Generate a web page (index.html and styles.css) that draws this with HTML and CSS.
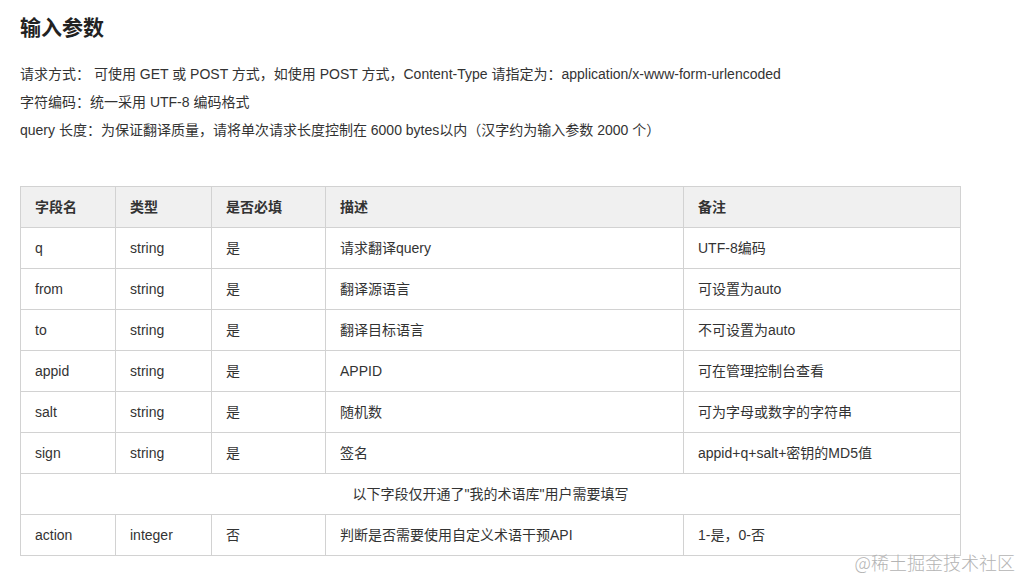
FILE: index.html
```html
<!DOCTYPE html>
<html lang="zh">
<head>
<meta charset="utf-8">
<link rel="stylesheet" href="styles.css">
</head>
<body>
<div class="page">
  <h1 class="title">输入参数</h1>
  <div class="info">
    <p>请求方式： 可使用 GET 或 POST 方式，如使用 POST 方式，Content-Type 请指定为：application/x-www-form-urlencoded</p>
    <p>字符编码：统一采用 UTF-8 编码格式</p>
    <p>query 长度：为保证翻译质量，请将单次请求长度控制在 6000 bytes以内（汉字约为输入参数 2000 个）</p>
  </div>
  <table class="params">
    <colgroup>
      <col class="c1"><col class="c2"><col class="c3"><col class="c4"><col class="c5">
    </colgroup>
    <thead>
      <tr><th>字段名</th><th>类型</th><th>是否必填</th><th>描述</th><th>备注</th></tr>
    </thead>
    <tbody>
      <tr><td>q</td><td>string</td><td>是</td><td>请求翻译query</td><td>UTF-8编码</td></tr>
      <tr><td>from</td><td>string</td><td>是</td><td>翻译源语言</td><td>可设置为auto</td></tr>
      <tr><td>to</td><td>string</td><td>是</td><td>翻译目标语言</td><td>不可设置为auto</td></tr>
      <tr><td>appid</td><td>string</td><td>是</td><td>APPID</td><td>可在管理控制台查看</td></tr>
      <tr><td>salt</td><td>string</td><td>是</td><td>随机数</td><td>可为字母或数字的字符串</td></tr>
      <tr><td>sign</td><td>string</td><td>是</td><td>签名</td><td>appid+q+salt+密钥的MD5值</td></tr>
      <tr><td colspan="5" class="merged">以下字段仅开通了"我的术语库"用户需要填写</td></tr>
      <tr><td>action</td><td>integer</td><td>否</td><td>判断是否需要使用自定义术语干预API</td><td>1-是，0-否</td></tr>
    </tbody>
  </table>
</div>
<div class="watermark">@稀土掘金技术社区</div>
</body>
</html>
```

FILE: styles.css
```css
html, body {
  margin: 0;
  padding: 0;
  background: #fff;
}
body {
  font-family: "Liberation Sans", Arial, "Noto Sans CJK SC", sans-serif;
  color: #333;
  font-size: 14px;
  width: 1022px;
  height: 580px;
  overflow: hidden;
}
.page {
  padding: 14px 20px 0 20px;
}
.title {
  margin: 0;
  font-size: 21px;
  line-height: 28px;
  font-weight: bold;
  color: #222;
}
.info {
  margin-top: 18px;
}
.info p {
  margin: 0;
  line-height: 28px;
  font-size: 14px;
}
.params {
  margin-top: 42px;
  border-collapse: collapse;
  table-layout: fixed;
  width: 941px;
}
.c1 { width: 95px; }
.c2 { width: 96px; }
.c3 { width: 114px; }
.c4 { width: 358px; }
.c5 { width: 277px; }
.params th,
.params td {
  border: 1px solid #d2d2d2;
  height: 41px;
  padding: 0 14px;
  line-height: 20px;
  text-align: left;
  font-size: 14px;
  box-sizing: border-box;
}
.params th {
  background: #f0f0f0;
  font-weight: bold;
  color: #333;
}
.params td.merged {
  text-align: center;
}
.watermark {
  position: absolute;
  right: 7px;
  top: 550px;
  font-family: "Noto Sans CJK SC", sans-serif;
  font-weight: 300;
  font-size: 18px;
  line-height: 24px;
  color: #b4b4b4;
}
```
